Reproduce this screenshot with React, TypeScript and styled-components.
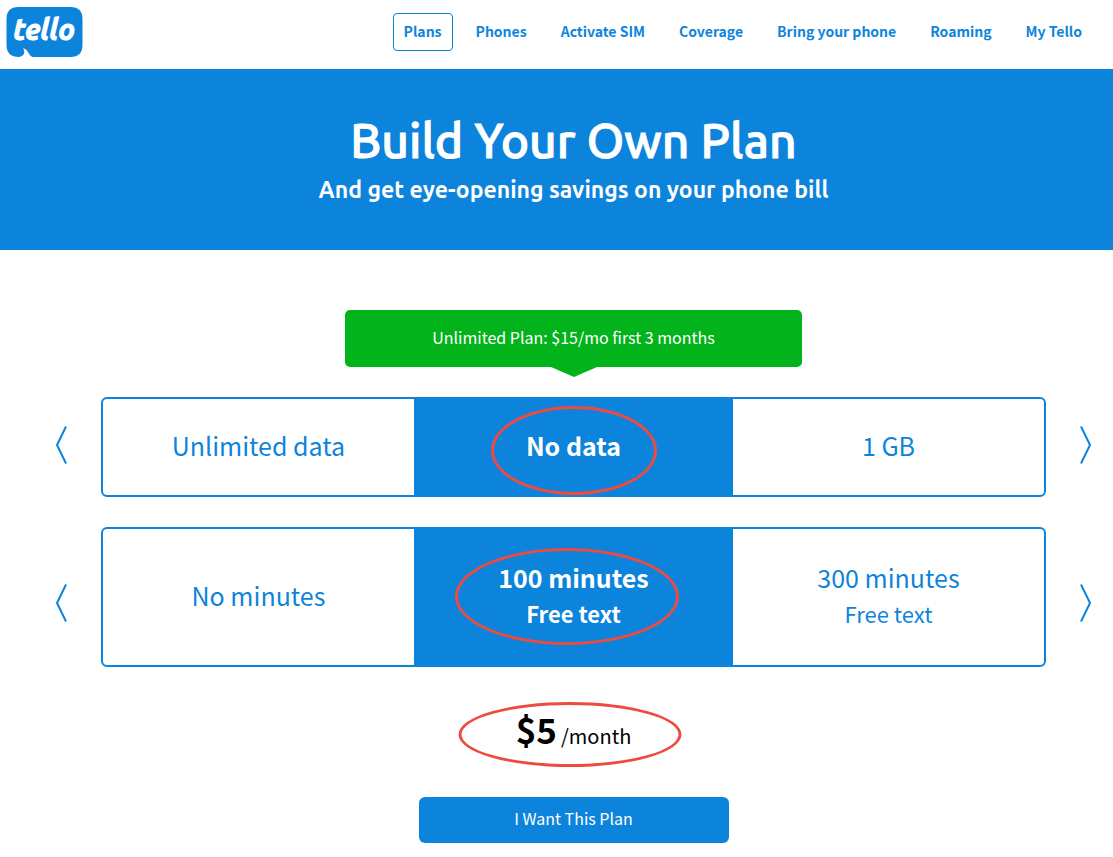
import React from "react";
import styled, { createGlobalStyle } from "styled-components";

const BLUE = "#0d84dc";
const GREEN = "#02b31b";
const RED = "#ee4b40";
const SANS = `"Source Sans Pro", "Noto Sans CJK SC", "Noto Sans", sans-serif`;
const DISPLAY = `Ubuntu, "Open Sans", "Noto Sans", sans-serif`;

const GlobalStyle = createGlobalStyle`
  *, *::before, *::after { box-sizing: border-box; }
  body { margin: 0; background: #fff; color: #000; font-family: ${SANS}; }
  button { font-family: inherit; cursor: pointer; }
  h1, p { margin: 0; }
`;

const Header = styled.header`
  display: flex;
  justify-content: space-between;
  align-items: flex-start;
  height: 69px;
  padding: 6px 20px 0 6px;
`;

const LogoLink = styled.a`
  display: block;
  line-height: 0;
`;

const Nav = styled.nav`
  display: flex;
  gap: 12px;
  padding-top: 7px;
`;

const NavLink = styled.a<{ $active?: boolean }>`
  padding: 0 10px 2px;
  border: 1px solid ${(p) => (p.$active ? BLUE : "transparent")};
  border-radius: 4px;
  color: ${BLUE};
  font-size: 14px;
  font-weight: 700;
  line-height: 34px;
  text-decoration: none;
  white-space: nowrap;
`;

const Hero = styled.section`
  padding: 39px 0 43px 34px;
  background: ${BLUE};
  color: #fff;
  font-family: ${DISPLAY};
  text-align: center;
`;

const HeroTitle = styled.h1`
  font-size: 48px;
  font-weight: 500;
  line-height: 64px;
  -webkit-text-stroke: 1px #fff;
`;

const HeroText = styled.p`
  font-size: 23px;
  font-weight: 600;
  line-height: 35px;
`;

const Main = styled.main`
  display: flex;
  flex-direction: column;
  align-items: center;
  padding: 60px 0 14px 34px;
`;

const Promo = styled.div`
  position: relative;
  width: 100%;
  max-width: 457px;
  margin-bottom: 30px;
  padding-bottom: 2px;
  border-radius: 5px;
  background: ${GREEN};
  color: #fff;
  font-size: 16px;
  line-height: 55px;
  text-align: center;

  &::after {
    content: "";
    position: absolute;
    top: 100%;
    left: 50%;
    margin-left: -23px;
    border: 23px solid transparent;
    border-top: 10px solid ${GREEN};
    border-bottom: 0;
  }
`;

const PickerRow = styled.div`
  display: grid;
  grid-template-columns: 55px 1fr 55px;
  gap: 12px;
  width: 100%;
  margin-bottom: 30px;
`;

const Arrow = styled.button<{ $pad: string }>`
  display: flex;
  align-items: center;
  justify-content: center;
  padding: ${(p) => p.$pad};
  border: 0;
  background: none;
  color: ${BLUE};
`;

const Options = styled.div<{ $height: number }>`
  display: grid;
  grid-template-columns: 39fr 40fr 39fr;
  min-height: ${(p) => p.$height}px;
  border: 2px solid ${BLUE};
  border-radius: 6px;
`;

const Option = styled.button<{ $selected?: boolean }>`
  position: relative;
  display: flex;
  flex-direction: column;
  align-items: center;
  justify-content: center;
  padding: 0 0 4px;
  border: 0;
  background: ${(p) => (p.$selected ? BLUE : "transparent")};
  color: ${(p) => (p.$selected ? "#fff" : BLUE)};
  font-size: 25px;
  font-weight: ${(p) => (p.$selected ? 700 : 400)};
  line-height: 36px;
`;

const OptionNote = styled.span`
  font-size: 22px;
`;

const Ring = styled.span<{ $w: number; $h: number; $x: number; $y: number }>`
  position: absolute;
  top: ${(p) => p.$y}px;
  left: calc(50% + ${(p) => p.$x}px);
  width: ${(p) => p.$w}px;
  height: ${(p) => p.$h}px;
  border: 3px solid ${RED};
  border-radius: 50%;
  transform: translateX(-50%);
  pointer-events: none;
`;

const Price = styled.p`
  position: relative;
  display: flex;
  align-items: baseline;
  justify-content: center;
  gap: 4px;
  width: 100%;
  padding: 7px 0 36px;
  font-size: 20px;
  line-height: 50px;
`;

const Amount = styled.strong`
  font-size: 35px;
  font-weight: 700;
`;

const BuyButton = styled.button`
  width: 100%;
  max-width: 310px;
  height: 46px;
  padding: 0 0 4px;
  border: 0;
  border-radius: 6px;
  background: ${BLUE};
  color: #fff;
  font-size: 16px;
`;

const Logo = () => (
  <svg width="78" height="52" viewBox="0 0 78 52" role="img" aria-label="tello">
    <path
      d="M12.500 1H64.500Q76.500 1 76.500 13V39Q76.500 51 64.500 51H27C22.500 50 23 44 17 42C19.500 46 18.500 50 13 51Q0.500 51 0.500 39V13Q0.500 1 12.500 1Z"
      fill={BLUE}
    />
    <text
      x="38"
      y="34"
      textAnchor="middle"
      fill="#fff"
      stroke="#fff"
      strokeWidth="1"
      strokeLinejoin="round"
      fontFamily="Ubuntu, Lato, sans-serif"
      fontSize="29"
      fontWeight="700"
      fontStyle="italic"
    >
      tello
    </text>
  </svg>
);

const Chevron = ({ next }: { next?: boolean }) => (
  <svg width="11" height="38" viewBox="0 0 11 38" fill="none" stroke="currentColor" strokeWidth="2" aria-hidden="true">
    <path d={next ? "M1 0.5L10 19L1 37.5" : "M10 0.5L1 19L10 37.5"} />
  </svg>
);

type Choice = { label: string; note?: string };

const Picker = ({
  name,
  choices,
  height,
  arrowPad,
  ring,
}: {
  name: string;
  choices: Choice[];
  height: number;
  arrowPad: string;
  ring: React.ReactNode;
}) => (
  <PickerRow>
    <Arrow $pad={arrowPad} aria-label={`Previous ${name}`}>
      <Chevron />
    </Arrow>
    <Options $height={height} role="group" aria-label={name}>
      {choices.map((c, i) => (
        <Option key={c.label} $selected={i === 1} aria-pressed={i === 1}>
          <span>{c.label}</span>
          {c.note && <OptionNote>{c.note}</OptionNote>}
          {i === 1 && ring}
        </Option>
      ))}
    </Options>
    <Arrow $pad={arrowPad} aria-label={`Next ${name}`}>
      <Chevron next />
    </Arrow>
  </PickerRow>
);

const LINKS = ["Plans", "Phones", "Activate SIM", "Coverage", "Bring your phone", "Roaming", "My Tello"];

export default function App() {
  return (
    <>
      <GlobalStyle />
      <Header>
        <LogoLink href="#">
          <Logo />
        </LogoLink>
        <Nav>
          {LINKS.map((l, i) => (
            <NavLink key={l} href="#" $active={i === 0}>
              {l}
            </NavLink>
          ))}
        </Nav>
      </Header>
      <Hero>
        <HeroTitle>Build Your Own Plan</HeroTitle>
        <HeroText>And get eye-opening savings on your phone bill</HeroText>
      </Hero>
      <Main>
        <Promo>Unlimited Plan: $15/mo first 3 months</Promo>
        <Picker
          name="data"
          height={100}
          arrowPad="0 0 4px"
          choices={[{ label: "Unlimited data" }, { label: "No data" }, { label: "1 GB" }]}
          ring={<Ring $w={166} $h={89} $x={1} $y={7} />}
        />
        <Picker
          name="minutes"
          height={140}
          arrowPad="12px 0 0"
          choices={[
            { label: "No minutes" },
            { label: "100 minutes", note: "Free text" },
            { label: "300 minutes", note: "Free text" },
          ]}
          ring={<Ring $w={224} $h={97} $x={-6} $y={19} />}
        />
        <Price>
          <Amount>$5</Amount>
          <span>/month</span>
          <Ring $w={223} $h={65} $x={-4} $y={5} />
        </Price>
        <BuyButton>I Want This Plan</BuyButton>
      </Main>
    </>
  );
}
